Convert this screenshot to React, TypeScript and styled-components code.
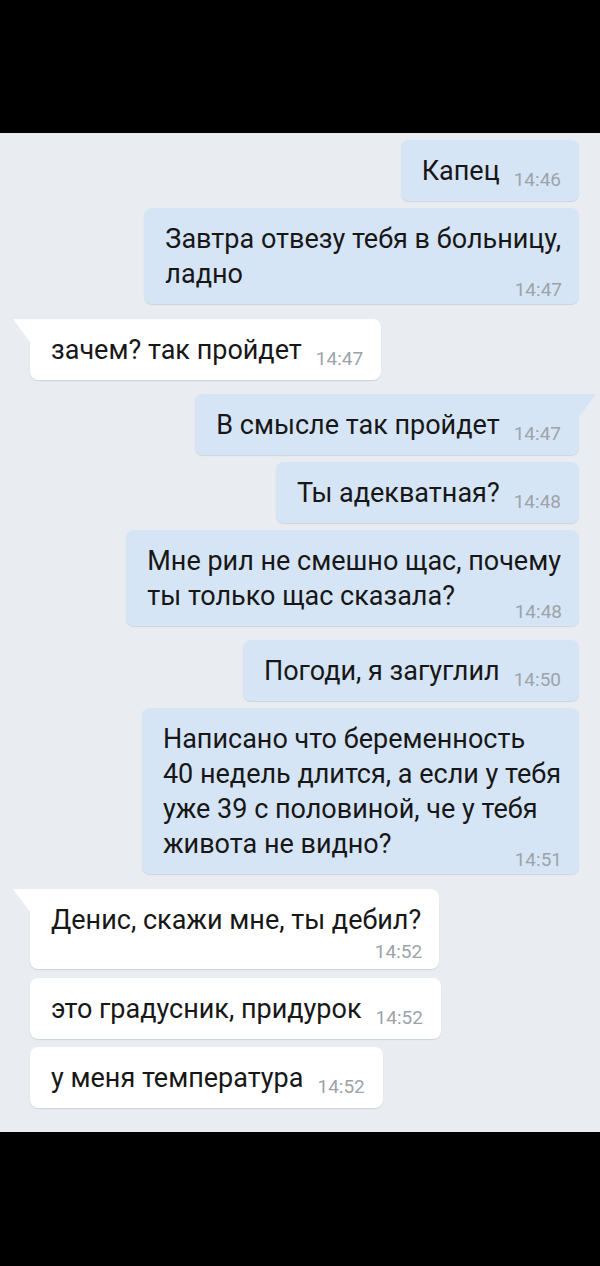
import styled, { createGlobalStyle, css } from "styled-components";

const GlobalStyle = createGlobalStyle`
  html, body {
    margin: 0;
    padding: 0;
    background: #000;
  }
  body {
    font-family: Roboto, "Noto Sans", "Liberation Sans", sans-serif;
    -webkit-font-smoothing: antialiased;
  }
`;

type Layout = "inline" | "block" | "stack";

type Msg = {
  id: number;
  out?: boolean;
  lines: string[];
  time: string;
  tail?: boolean;
  layout: Layout;
  gap: number;
};

const messages: Msg[] = [
  { id: 1, out: true, lines: ["Капец"], time: "14:46", layout: "inline", gap: 7 },
  {
    id: 2,
    out: true,
    lines: ["Завтра отвезу тебя в больницу,", "ладно"],
    time: "14:47",
    layout: "block",
    gap: 7,
  },
  { id: 3, lines: ["зачем? так пройдет"], time: "14:47", tail: true, layout: "inline", gap: 15 },
  {
    id: 4,
    out: true,
    lines: ["В смысле так пройдет"],
    time: "14:47",
    tail: true,
    layout: "inline",
    gap: 14,
  },
  { id: 5, out: true, lines: ["Ты адекватная?"], time: "14:48", layout: "inline", gap: 7 },
  {
    id: 6,
    out: true,
    lines: ["Мне рил не смешно щас, почему", "ты только щас сказала?"],
    time: "14:48",
    layout: "block",
    gap: 7,
  },
  { id: 7, out: true, lines: ["Погоди, я загуглил"], time: "14:50", layout: "inline", gap: 14 },
  {
    id: 8,
    out: true,
    lines: [
      "Написано что беременность",
      "40 недель длится, а если у тебя",
      "уже 39 с половиной, че у тебя",
      "живота не видно?",
    ],
    time: "14:51",
    layout: "block",
    gap: 7,
  },
  {
    id: 9,
    lines: ["Денис, скажи мне, ты дебил?"],
    time: "14:52",
    tail: true,
    layout: "stack",
    gap: 15,
  },
  { id: 10, lines: ["это градусник, придурок"], time: "14:52", layout: "inline", gap: 9 },
  { id: 11, lines: ["у меня температура"], time: "14:52", layout: "inline", gap: 8 },
];

export default function App() {
  return (
    <>
      <GlobalStyle />
      <Screen>
        <BlackBar $h={133} />
        <Chat>
          {messages.map((m) => (
            <Row key={m.id} $out={m.out} $gap={m.gap}>
              <Bubble $out={m.out} $tail={m.tail} $layout={m.layout}>
                <Text>
                  {m.lines.map((l, i) => (
                    <Line key={i}>{l}</Line>
                  ))}
                </Text>
                <Time $layout={m.layout}>{m.time}</Time>
              </Bubble>
            </Row>
          ))}
        </Chat>
        <BlackBar $h={134} />
      </Screen>
    </>
  );
}

const Screen = styled.div`
  width: 600px;
  height: 1266px;
  display: flex;
  flex-direction: column;
  background: #000;
  overflow: hidden;
`;

const BlackBar = styled.div<{ $h: number }>`
  flex: 0 0 ${({ $h }) => $h}px;
  background: #000;
`;

const Chat = styled.div`
  flex: 1;
  background: #e9edf1;
  padding: 0 21px 0 30px;
  display: flex;
  flex-direction: column;
`;

const Row = styled.div<{ $out?: boolean; $gap: number }>`
  display: flex;
  justify-content: ${({ $out }) => ($out ? "flex-end" : "flex-start")};
  margin-top: ${({ $gap }) => $gap}px;
`;

const Bubble = styled.div<{ $out?: boolean; $tail?: boolean; $layout: Layout }>`
  position: relative;
  display: ${({ $layout }) => ($layout === "inline" ? "flex" : "block")};
  align-items: flex-end;
  gap: 14px;
  padding: 14px 18px 12px 21px;
  border-radius: 8px;
  background: ${({ $out }) => ($out ? "#d6e5f6" : "#ffffff")};
  box-shadow: 0 1px 1px rgba(80, 100, 130, 0.18);

  ${({ $tail, $out }) =>
    $tail &&
    css`
      ${$out ? "border-top-right-radius: 0;" : "border-top-left-radius: 0;"}
      &::before {
        content: "";
        position: absolute;
        top: 0;
        ${$out ? "right: -17px;" : "left: -17px;"}
        width: 17px;
        height: 23px;
        background: ${$out ? "#d6e5f6" : "#ffffff"};
        clip-path: ${$out
          ? "polygon(0 0, 100% 0, 0 100%)"
          : "polygon(0 0, 100% 0, 100% 100%)"};
      }
    `}
`;

const Text = styled.div`
  display: flex;
  flex-direction: column;
  font-size: 27px;
  line-height: 35px;
  color: #171717;
  white-space: nowrap;
`;

const Line = styled.span``;

const Time = styled.span<{ $layout: Layout }>`
  font-size: 19px;
  line-height: 19px;
  color: #9da3a9;
  white-space: nowrap;
  margin-bottom: 0;

  ${({ $layout }) =>
    $layout === "block" &&
    css`
      display: block;
      text-align: right;
      margin: -12px -1px -7px 0;
    `}

  ${({ $layout }) =>
    $layout === "stack" &&
    css`
      display: block;
      text-align: right;
      margin: 4px -1px -4px 0;
    `}
`;
